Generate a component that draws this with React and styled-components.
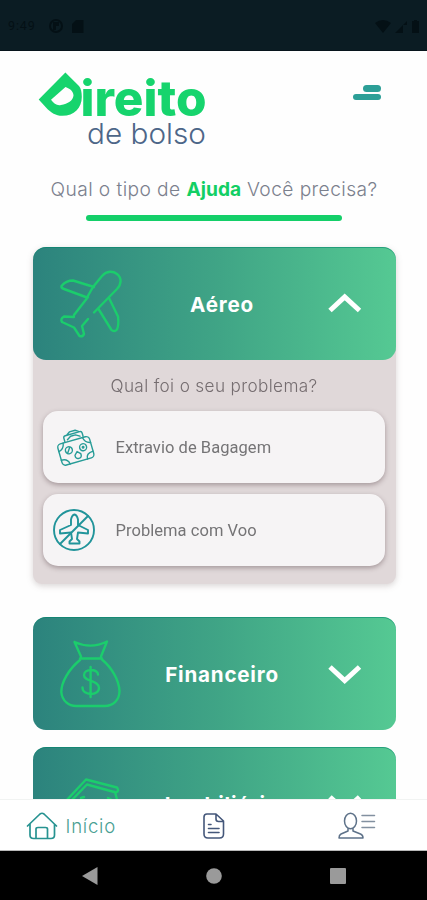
import React from "react";
import styled, { createGlobalStyle } from "styled-components";

const Global = createGlobalStyle`
  * { box-sizing: border-box; }
  body { margin: 0; background: #fff; }
`;

const Screen = styled.div`
  width: 427px;
  height: 900px;
  display: flex;
  flex-direction: column;
  overflow: hidden;
  background: #fefefe;
  font-family: Inter, "Open Sans", sans-serif;
`;

const StatusBar = styled.header`
  height: 51px;
  flex: none;
  display: flex;
  align-items: center;
  justify-content: space-between;
  padding: 2px 7px 0 8px;
  background: #0b1c23;
  border-bottom: 1px solid #07141c;
  color: #041015;
`;

const StatusGroup = styled.div`
  display: flex;
  align-items: center;
  gap: ${(p) => p.$gap}px;
`;

const Clock = styled.span`
  font: 400 12.5px/14px Roboto, sans-serif;
  width: 30px;
  letter-spacing: 0.9px;
  margin-right: 2px;
`;

const Content = styled.main`
  flex: 1;
  min-height: 0;
  overflow: hidden;
  padding: 0 31.5px 0 32.5px;
`;

const TopBar = styled.div`
  height: 121px;
  display: flex;
  justify-content: space-between;
  align-items: flex-start;
  padding: 17px 14.5px 0 3.5px;
`;

const MenuButton = styled.button`
  border: 0;
  padding: 0;
  margin-top: 17px;
  background: none;
  display: flex;
  flex-direction: column;
  align-items: flex-end;
  gap: 2px;
`;

const MenuBar = styled.span`
  width: ${(p) => p.$width}px;
  height: 6.5px;
  border-radius: 3.5px;
  background: #2c9f97;
`;

const Question = styled.h1`
  margin: 5px 0 0;
  text-align: center;
  white-space: nowrap;
  font-size: 19.2px;
  line-height: 24px;
  font-weight: 300;
  letter-spacing: 0.42px;
  color: #7b808d;
`;

const Highlight = styled.strong`
  font-weight: 700;
  letter-spacing: 0;
  color: #12cf64;
`;

const Underline = styled.div`
  width: 256px;
  height: 6px;
  margin: 14px auto 26px 53.5px;
  border-radius: 3px;
  background: #14cf69;
`;

const Category = styled.section`
  margin-bottom: ${(p) => (p.$open ? 32.5 : 17.5)}px;
  border-radius: 13px 13px 9px 9px;
  background: ${(p) => (p.$open ? "linear-gradient(transparent 100px, #e0d8d9 100px)" : "none")};
  filter: ${(p) => (p.$open ? "drop-shadow(0 2px 3px rgba(70, 50, 50, 0.2))" : "none")};
`;

const CategoryHeader = styled.div`
  height: 113px;
  padding: 1px 34px 0 25px;
  border-radius: 13px;
  display: grid;
  grid-template-columns: 66px 1fr 34px;
  align-items: center;
  background: linear-gradient(90deg, #2c837d 0%, #40a586 52%, #55c993 100%);
  box-shadow: inset 0 1px 0 rgba(0, 132, 105, 0.55);
  color: #fff;
`;

const CategoryTitle = styled.h2`
  margin: 0;
  text-align: center;
  font-size: 20.6px;
  line-height: 26px;
  font-weight: 700;
  letter-spacing: 0.8px;
  padding: 2px 7px 0 0;
`;

const Problems = styled.div`
  height: 224px;
  padding: 14px 10.5px 0 10.5px;
  display: flex;
  flex-direction: column;
  gap: 11px;
`;

const ProblemsTitle = styled.p`
  margin: 0 0 3px;
  text-align: center;
  font-size: 17.2px;
  line-height: 23px;
  font-weight: 300;
  letter-spacing: 0.35px;
  color: #756d70;
`;

const Problem = styled.div`
  height: 72px;
  flex: none;
  border-radius: 15px;
  padding-left: 9px;
  display: flex;
  align-items: center;
  gap: 19.5px;
  background: #f6f4f5;
  box-shadow: 0 2px 5px rgba(60, 40, 45, 0.36);
  font: 400 16.5px/20px Roboto, sans-serif;
  letter-spacing: 0.05px;
  color: #757476;
`;

const ProblemLabel = styled.span`
  padding-top: 2px;
`;

const BottomNav = styled.nav`
  height: 52px;
  flex: none;
  display: grid;
  grid-template-columns: 1fr 28px 1fr;
  align-items: center;
  padding: 1px 25px 0 25px;
  background: #fff;
  border-top: 1px solid #f1f3f2;
  border-bottom: 1px solid #b9b9b9;
`;

const NavItem = styled.a`
  display: flex;
  align-items: center;
  justify-content: ${(p) => p.$align || "center"};
  padding-right: ${(p) => (p.$align === "flex-end" ? 25 : 0)}px;
  gap: 7.5px;
  color: #4a9f93;
  font-size: 18.6px;
  font-weight: 300;
  letter-spacing: 0.75px;
`;

const SystemNav = styled.footer`
  height: 49px;
  flex: none;
  display: grid;
  grid-template-columns: 1fr 1fr 1fr;
  justify-items: center;
  align-items: center;
  padding: 0 27px 0 28px;
  background: #000;
`;

const Icon = ({ box, children, stroke = "#1bcd6c", weight = 2.4 }) => {
  const [, , w, h] = box.split(" ");
  return (
    <svg
      width={w}
      height={h}
      viewBox={box}
      fill="none"
      stroke={stroke}
      strokeWidth={weight}
      strokeLinecap="round"
      strokeLinejoin="round"
      display="block"
      aria-hidden="true"
    >
      {children}
    </svg>
  );
};

const Logo = () => (
  <svg width="176" height="86" viewBox="36 68 176 86" role="img" aria-label="Direito de bolso">
    <path
      fill="#16d46d"
      fillRule="evenodd"
      d="M65.4 72.5 L38.700 99.5 L46 107.500 C51 113 56 115.8 62 115.8 C74 116 81.800 108 81.800 97 C81.800 92 81 88.500 79 86 Z M65.500 87 L51 99.800 C54 104 57 105.800 61 105 C68 104 73 100.500 73.500 95.500 C73.500 91.500 70 88.500 65.500 87 Z"
    />
    <text x="80.500" y="116.400" textLength="126" lengthAdjust="spacingAndGlyphs" fontFamily="Inter, sans-serif" fontSize="49.500" fontWeight="800" fill="#16d46d">
      ireito
    </text>
    <text x="87" y="144" textLength="119" lengthAdjust="spacingAndGlyphs" fontFamily="Inter, sans-serif" fontSize="29" fontWeight="300" fill="#4d6688">
      de bolso
    </text>
  </svg>
);

const PlaneIcon = () => (
  <Icon box="58 265 66 76">
    <path d="M74 314 L88 296 M93 286 L102 275 C107 269.500 113 270 117 273 C122 277 121.500 283 117 288 L94 311.500 M88 318 L82 325 L84 333 Q83 336 79.500 335 L74 326.500 L62 321 Q60 318 64 315.500 L74 316" />
    <path d="M94 286 L73 279.500 C68 279.500 64 282 61.500 285 Q61 287 64 288 L87 296.500 L93 286" />
    <path d="M98.500 308 L111.500 329 Q114 331.500 117 328.500 Q119 324 118 315.500 L109 297" />
  </Icon>
);

const MoneyBagIcon = () => (
  <Icon box="58 636 66 76">
    <path d="M74.500 642 Q91 649.500 107 641.500 L101 656.500 M74.500 642 L81 656.500 M80 658.500 H102" />
    <path d="M80 660 C69 669 61.300 682 61.300 692 C62 701 69 706 76 706 H105 C113 706 119.500 700 119.500 691 C119 680 112 668 102 659.500" />
    <path d="M90.600 667 V697 M98 674.500 C98 668.500 84 668.500 84 675 C84 682 99 680 99 688 C99 696 82.500 696 82.500 687.500" />
  </Icon>
);

const HouseLoanIcon = () => (
  <Icon box="58 766 66 76">
    <path d="M65 802 L86 779.500 L117 787.500 Q119.500 791 116 792.500 L87 784.500 L69 803 M115 792 L118 803 M81 798 L84 797 M108 798 L112 800" />
  </Icon>
);

const ChevronIcon = ({ up }) => (
  <svg width="34" height="22" viewBox="0 0 34 22" fill="none" stroke="#fff" strokeWidth="5" display="block">
    <path d={up ? "M2 17.500 L16.700 4 L31.500 17.500" : "M2 4 L16.700 17.500 L31.500 4"} />
  </svg>
);

const LuggageIcon = () => (
  <Icon box="52 426 44 44" stroke="#279c97" weight="1.4">
    <g transform="rotate(-16 75 449)">
      <rect x="58.500" y="441" width="33" height="22" rx="3.500" />
      <path d="M58.500 448 Q64 447 65 441 M85 441 Q86 447 91.500 448 M58.500 457 Q65 457 66 463 M84 463 Q84 457 91.500 457" />
      <path d="M67 440 V436.500 Q67 434.500 69 434.500 H84 Q86 434.500 86 436.500 V440 M70 439 L74 436.500 H79 L83 439 M71 434 L74 432 H80 L83 434" />
      <circle cx="68.500" cy="449.500" r="3.500" />
      <path d="M66.500 452 L70 447" />
      <circle cx="83" cy="450.500" r="3.500" />
      <circle cx="83" cy="450.500" r="0.800" />
      <path d="M76 453 L73 456 Q72.500 460 76 460 Q79.500 460 79 456 Z" />
    </g>
  </Icon>
);

const NoFlightIcon = () => (
  <Icon box="52 509 44 44" stroke="#21949a" weight="1.900">
    <circle cx="74" cy="531" r="20" />
    <path d="M71 526 V520.500 Q72 516 74.500 515.500 Q77 516 78 520.500 V526 L88 531 V534.500 L78 533.500 L77 540 L79.500 542.500 V544.500 H69.500 V542.500 L72 540 L71 533.500 L60 534.500 V531 Z" />
    <path d="M60 545 L88 517" />
  </Icon>
);

const HomeIcon = () => (
  <Icon box="25 811 33 30" stroke="#279391" weight="1.700">
    <path d="M27.500 826 L40 814 Q42 812.500 44 814 L56.500 826 M30 824 V835 Q30 838.500 33.500 838.500 H51 Q54.500 838.500 54.500 835 V824 M36 838 V829 Q36 827.500 38 827.500 H45.500 Q47.500 827.500 47.500 829 V838" />
  </Icon>
);

const DocumentIcon = () => (
  <Icon box="202 812 24 28" stroke="#44577a" weight="1.600">
    <path d="M216 814 H207 Q204 814 204 817 V834 Q204 838 208 838 H219.500 Q223.500 838 223.500 834 V821 L216 814 V819 Q216 821.500 218.500 821.500 H223.500 M208.500 824.500 H211 M208.500 828.500 H219 M208.500 832.500 H219" />
  </Icon>
);

const ProfileIcon = () => (
  <Icon box="337 811 40 29" stroke="#5e7289" weight="1.500">
    <ellipse cx="350.500" cy="821" rx="6" ry="7.800" />
    <path d="M348 829 V831 L341 834 Q339 835 339 838 H363 Q363 835 360.500 834 L353 831 V829" />
    <path d="M362 815.500 H374.500 M362 821.500 H374.500 M362 827.500 H374.500" stroke="#8290a0" />
  </Icon>
);

const categories = [
  {
    title: "Aéreo",
    icon: <PlaneIcon />,
    problems: [
      { label: "Extravio de Bagagem", icon: <LuggageIcon /> },
      { label: "Problema com Voo", icon: <NoFlightIcon /> },
    ],
  },
  { title: "Financeiro", icon: <MoneyBagIcon /> },
  { title: "Imobiliário", icon: <HouseLoanIcon /> },
];

export default function App() {
  return (
    <>
      <Global />
      <Screen>
        <StatusBar>
          <StatusGroup $gap={9}>
            <Clock>9:49</Clock>
            <svg width="14" height="14" viewBox="0 0 14 14">
              <circle cx="7" cy="7" r="6" fill="none" stroke="currentColor" strokeWidth="2" />
              <path d="M4 3h6v4H7v4H4z" fill="currentColor" />
            </svg>
            <svg width="12" height="13" viewBox="0 0 12 13">
              <path d="M4 0h7.500v13H0V4z" fill="currentColor" />
            </svg>
          </StatusGroup>
          <StatusGroup $gap={4}>
            <svg width="16" height="13" viewBox="0 0 16 13">
              <path d="M0 3Q8-3 16 3L8 13z" fill="currentColor" />
            </svg>
            <svg width="12" height="13" viewBox="0 0 12 13">
              <path d="M0 13L12 1v4H8v8z" fill="currentColor" />
            </svg>
            <svg width="9" height="13" viewBox="0 0 9 13">
              <path d="M3 0h3v1h2v12H1V1h2z" fill="currentColor" />
            </svg>
          </StatusGroup>
        </StatusBar>

        <Content>
          <TopBar>
            <Logo />
            <MenuButton aria-label="Menu">
              <MenuBar $width={18} />
              <MenuBar $width={28} />
            </MenuButton>
          </TopBar>
          <Question>
            Qual o tipo de <Highlight>Ajuda</Highlight> Você precisa?
          </Question>
          <Underline />
          {categories.map(({ title, icon, problems }) => (
            <Category key={title} $open={!!problems}>
              <CategoryHeader>
                {icon}
                <CategoryTitle>{title}</CategoryTitle>
                <ChevronIcon up={!!problems} />
              </CategoryHeader>
              {problems && (
                <Problems>
                  <ProblemsTitle>Qual foi o seu problema?</ProblemsTitle>
                  {problems.map((p) => (
                    <Problem key={p.label}>
                      {p.icon}
                      <ProblemLabel>{p.label}</ProblemLabel>
                    </Problem>
                  ))}
                </Problems>
              )}
            </Category>
          ))}
        </Content>

        <BottomNav>
          <NavItem $align="flex-start">
            <HomeIcon />
            <span>Início</span>
          </NavItem>
          <NavItem>
            <DocumentIcon />
          </NavItem>
          <NavItem $align="flex-end">
            <ProfileIcon />
          </NavItem>
        </BottomNav>

        <SystemNav>
          <svg width="16" height="18" viewBox="0 0 16 18">
            <path d="M0 9L15.500 0v18z" fill="#9a9a9a" />
          </svg>
          <svg width="16" height="16" viewBox="0 0 16 16">
            <circle cx="8" cy="8" r="7.800" fill="#9a9a9a" />
          </svg>
          <svg width="16" height="16" viewBox="0 0 16 16">
            <rect width="16" height="16" rx="1" fill="#9a9a9a" />
          </svg>
        </SystemNav>
      </Screen>
    </>
  );
}
